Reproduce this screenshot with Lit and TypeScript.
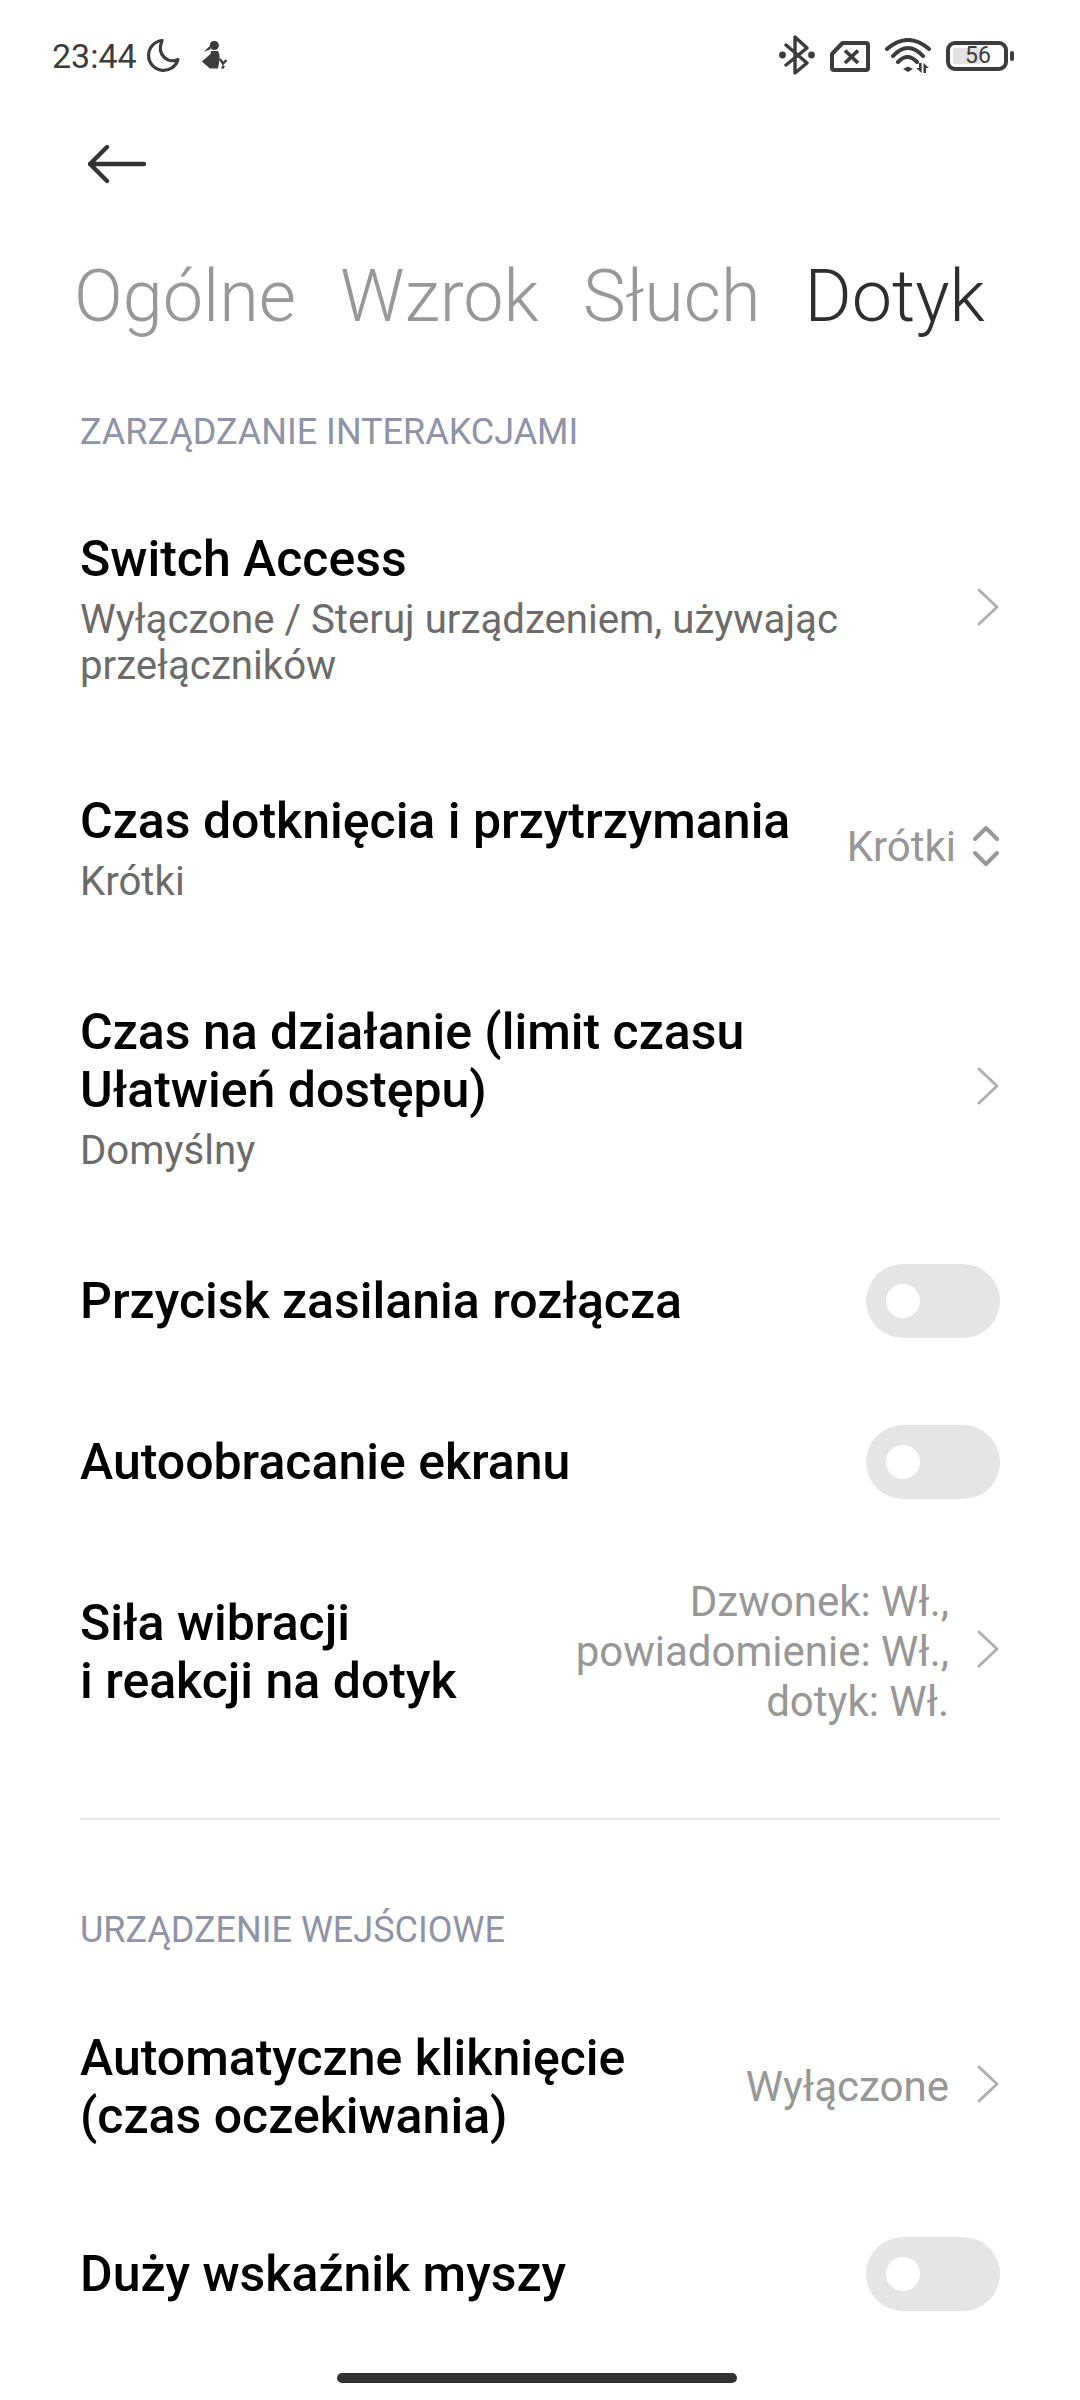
import { LitElement, html, css } from 'lit';
import { customElement } from 'lit/decorators.js';

const chevron = html`<svg class="chev" width="24" height="40" viewBox="0 0 24 40"><path d="M3 3l18 17L3 37" fill="none" stroke="#b0b0b0" stroke-width="3" stroke-linecap="round" stroke-linejoin="round"/></svg>`;

const updown = html`<svg class="chev" width="28" height="42" viewBox="0 0 28 42"><path d="M3 14L14 3l11 11M3 28l11 11 11-11" fill="none" stroke="#979797" stroke-width="4" stroke-linecap="round" stroke-linejoin="round"/></svg>`;

const ic = '#3c3c3c';

@customElement('app-root')
export class AppRoot extends LitElement {
  static styles = css`
    :host {
      display: block;
      width: 1080px;
      height: 2400px;
      background: #fff;
      font-family: Roboto, sans-serif;
      overflow: hidden;
      position: relative;
    }
    .status {
      height: 112px;
      padding: 0 66px 0 52px;
      display: flex;
      align-items: center;
      color: #3c3c3c;
      font-size: 34px;
    }
    .status .time { margin-right: 8px; }
    .spacer { flex: 1; }
    .status svg { display: block; }
    .person { margin-left: 20px; }
    .bt { margin-top: -2px; }
    .sim, .wifi, .battery { margin-left: 15px; }
    .battery {
      position: relative;
      width: 62px;
      height: 30px;
      border: 4px solid #3c3c3c;
      border-radius: 9px;
      box-sizing: border-box;
      display: flex;
      align-items: center;
    }
    .battery .level { position: absolute; left: 3px; top: 3px; bottom: 3px; width: 27px; background: #e2e2e2; border-radius: 2px; }
    .battery span { position: relative; font-size: 23px; line-height: 20px; margin-left: 15px; }
    .nub { width: 4px; height: 10px; border-radius: 2px; background: #3c3c3c; margin-left: 2px; }
    .back { height: 104px; padding-left: 88px; display: flex; align-items: center; }
    .tabs {
      display: flex;
      gap: 44px;
      padding: 0 0 0 74px;
      height: 94px;
      margin-top: 33px;
      align-items: center;
      font-size: 72px;
      font-weight: 300;
      color: #989898;
      white-space: nowrap;
    }
    .tabs .on { color: #2e2e2e; }
    .section {
      color: #8e93a8;
      font-size: 36px;
      padding: 0 80px;
      line-height: 44px;
    }
    .row {
      display: flex;
      align-items: center;
      padding: 0 80px;
    }
    .main { flex: 1; min-width: 0; }
    .title { font-size: 50px; font-weight: 500; line-height: 58px; color: #000; }
    .sub { font-size: 40.2px; line-height: 46px; color: #6b6b6b; margin-top: 9px; }
    .value { font-size: 42px; line-height: 50px; color: #979797; text-align: right; margin-right: 27px; white-space: nowrap; }
    .value.short { margin-right: 16px; margin-bottom: 4px; }
    .chev { flex: none; margin-bottom: 6px; }
    .toggle {
      width: 134px;
      height: 74px;
      border-radius: 37px;
      background: #e5e5e5;
      display: flex;
      align-items: center;
      padding-left: 20px;
      box-sizing: border-box;
      flex: none;
    }
    .toggle i { width: 34px; height: 34px; border-radius: 50%; background: #fff; display: block; }
    .divider { height: 2px; background: #e6e6e6; margin: 0 80px; }
    .home { position: absolute; left: 337px; top: 2373px; width: 400px; height: 10px; border-radius: 5px; background: #333; }
  `;

  private toggle() {
    return html`<div class="toggle"><i></i></div>`;
  }

  render() {
    return html`
      <div class="status">
        <span class="time">23:44</span>
        <svg class="moon" width="36" height="36" viewBox="0 0 36 36">
          <path d="M17 2.5A15 15 0 1 0 33 21.5C24 26 11 18 17 2.5Z" fill="none" stroke=${ic} stroke-width="3.2" stroke-linejoin="round"/>
        </svg>
        <svg class="person" width="27" height="30" viewBox="0 0 27 30">
          <circle cx="13.3" cy="4.4" r="4.6" fill=${ic}/>
          <path d="M9.5 4.5L2.7 10.7 9.3 8.6zM10 10h7c2 3 2 8 1 12l-1 5.5H9L.8 20.5 9.5 13z" fill=${ic}/>
          <path d="M19 18l3 4.5 3.5-3.500M21 27.4l2-2.600" fill="none" stroke=${ic} stroke-width="2.4"/>
        </svg>
        <div class="spacer"></div>
        <svg class="bt" width="36" height="40" viewBox="0 0 36 40">
          <path d="M7 10l21 18-12 10V2l12 11L7 30" fill="none" stroke=${ic} stroke-width="3.4" stroke-linejoin="round" stroke-linecap="round"/>
          <circle cx="3.5" cy="20" r="3.4" fill=${ic}/>
          <circle cx="32.5" cy="20" r="3.4" fill=${ic}/>
        </svg>
        <svg class="sim" width="40" height="31" viewBox="0 0 40 31">
          <path d="M12.5 2H36a2 2 0 0 1 2 2v23a2 2 0 0 1-2 2H4a2 2 0 0 1-2-2V13z" fill="none" stroke=${ic} stroke-width="4" stroke-linejoin="round"/>
          <path d="M15 9.5L28 22M28 9.5L15 22" stroke=${ic} stroke-width="3.8" fill="none"/>
        </svg>
        <svg class="wifi" width="46" height="37" viewBox="0 0 46 37">
          <path d="M2 11Q23-7 44 11M8 18Q23 2 38 18M13 24Q22.500 14 32 24" fill="none" stroke=${ic} stroke-width="4" stroke-linecap="round"/>
          <path d="M18 31l5-2.500 5 2.500-5 3z" fill=${ic}/>
          <path d="M34 25h2.600v10l-5.500-5h2.900zM38.500 35h2.600v-5h2.900l-5.500-5z" fill=${ic}/>
        </svg>
        <div class="battery"><div class="level"></div><span>56</span></div>
        <div class="nub"></div>
      </div>

      <div class="back">
        <svg width="60" height="40" viewBox="0 0 60 40">
          <path d="M2 20h54M19 3L2 20l17 17" fill="none" stroke="#333" stroke-width="4.4" stroke-linecap="round" stroke-linejoin="round"/>
        </svg>
      </div>

      <div class="tabs">
        <span>Ogólne</span><span>Wzrok</span><span>Słuch</span><span class="on">Dotyk</span>
      </div>

      <div class="section" style="margin-top:67px">ZARZĄDZANIE INTERAKCJAMI</div>

      <div class="row" style="margin-top:76px">
        <div class="main">
          <div class="title">Switch Access</div>
          <div class="sub">Wyłączone / Steruj urządzeniem, używając<br />przełączników</div>
        </div>
        ${chevron}
      </div>

      <div class="row" style="margin-top:103px">
        <div class="main">
          <div class="title">Czas dotknięcia i przytrzymania</div>
          <div class="sub">Krótki</div>
        </div>
        <div class="value short">Krótki</div>
        ${updown}
      </div>

      <div class="row" style="margin-top:98px">
        <div class="main">
          <div class="title">Czas na działanie (limit czasu<br />Ułatwień dostępu)</div>
          <div class="sub">Domyślny</div>
        </div>
        ${chevron}
      </div>

      <div class="row" style="margin-top:90px">
        <div class="main"><div class="title">Przycisk zasilania rozłącza</div></div>
        ${this.toggle()}
      </div>

      <div class="row" style="margin-top:87px">
        <div class="main"><div class="title">Autoobracanie ekranu</div></div>
        ${this.toggle()}
      </div>

      <div class="row" style="margin-top:78px">
        <div class="main"><div class="title">Siła wibracji<br />i reakcji na dotyk</div></div>
        <div class="value">Dzwonek: Wł.,<br />powiadomienie: Wł.,<br />dotyk: Wł.</div>
        ${chevron}
      </div>

      <div class="divider" style="margin-top:91px"></div>

      <div class="section" style="margin-top:88px">URZĄDZENIE WEJŚCIOWE</div>

      <div class="row" style="margin-top:77px">
        <div class="main"><div class="title">Automatyczne kliknięcie<br />(czas oczekiwania)</div></div>
        <div class="value">Wyłączone</div>
        ${chevron}
      </div>

      <div class="row" style="margin-top:92px">
        <div class="main"><div class="title">Duży wskaźnik myszy</div></div>
        ${this.toggle()}
      </div>

      <div class="home"></div>
    `;
  }
}
